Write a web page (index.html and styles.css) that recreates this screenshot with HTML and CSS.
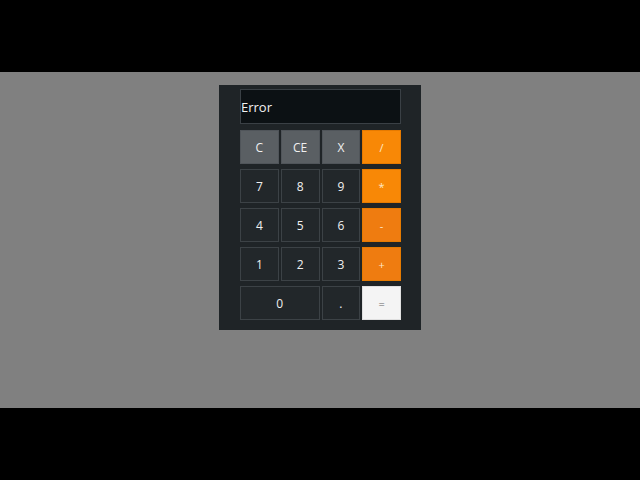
FILE: index.html
```html
<!DOCTYPE html>
<html>
<head>
<meta charset="utf-8">
<link rel="stylesheet" href="styles.css">
</head>
<body>
<div class="bar"></div>
<div class="stage">
  <div class="calc">
    <div class="display">Error</div>
    <div class="keys">
      <div class="key fn">C</div>
      <div class="key fn">CE</div>
      <div class="key fn">X</div>
      <div class="key op">/</div>
      <div class="key">7</div>
      <div class="key">8</div>
      <div class="key">9</div>
      <div class="key op">*</div>
      <div class="key">4</div>
      <div class="key">5</div>
      <div class="key">6</div>
      <div class="key op dark">-</div>
      <div class="key">1</div>
      <div class="key">2</div>
      <div class="key">3</div>
      <div class="key op dark">+</div>
      <div class="key wide">0</div>
      <div class="key">.</div>
      <div class="key eq">=</div>
    </div>
  </div>
</div>
<div class="bar"></div>
</body>
</html>
```
FILE: styles.css
```css
html, body {
  margin: 0;
  padding: 0;
  background: #000;
  font-family: "Open Sans", "Noto Sans", sans-serif;
}
.bar {
  height: 72px;
  background: #000;
}
.stage {
  height: 336px;
  background: #808080;
  display: flex;
  justify-content: center;
  align-items: flex-start;
}
.calc {
  margin-top: 13px;
  margin-left: 0;
  width: 202px;
  box-sizing: border-box;
  padding: 4px 20px 10px 21px;
  background: #1f2427;
  display: flex;
  flex-direction: column;
  gap: 6px;
}
.display {
  height: 35px;
  box-sizing: border-box;
  border: 1px solid #3a4045;
  background: #0c1114;
  color: #f2f2f2;
  font-size: 13px;
  display: flex;
  align-items: center;
  padding-left: 0;
}
.keys {
  display: grid;
  grid-template-columns: repeat(4, 1fr);
  grid-template-rows: repeat(5, 34px);
  column-gap: 2px;
  row-gap: 5px;
}
.key {
  box-sizing: border-box;
  border: 1px solid #3c4246;
  background: #22272a;
  color: #f0f0f0;
  font-size: 12px;
  display: flex;
  align-items: center;
  justify-content: center;
}
.key.fn {
  background: #5a5f63;
  border-color: #50555a;
}
.key.op {
  background: #f88806;
  border-color: #e67a00;
  color: #ffe8c8;
  font-size: 11px;
}
.key.op.dark {
  background: #ef7c10;
}
.key.wide {
  grid-column: span 2;
}
.key.eq {
  background: #f4f4f4;
  border-color: #e0e0e0;
  color: #666;
  font-size: 11px;
}
```
